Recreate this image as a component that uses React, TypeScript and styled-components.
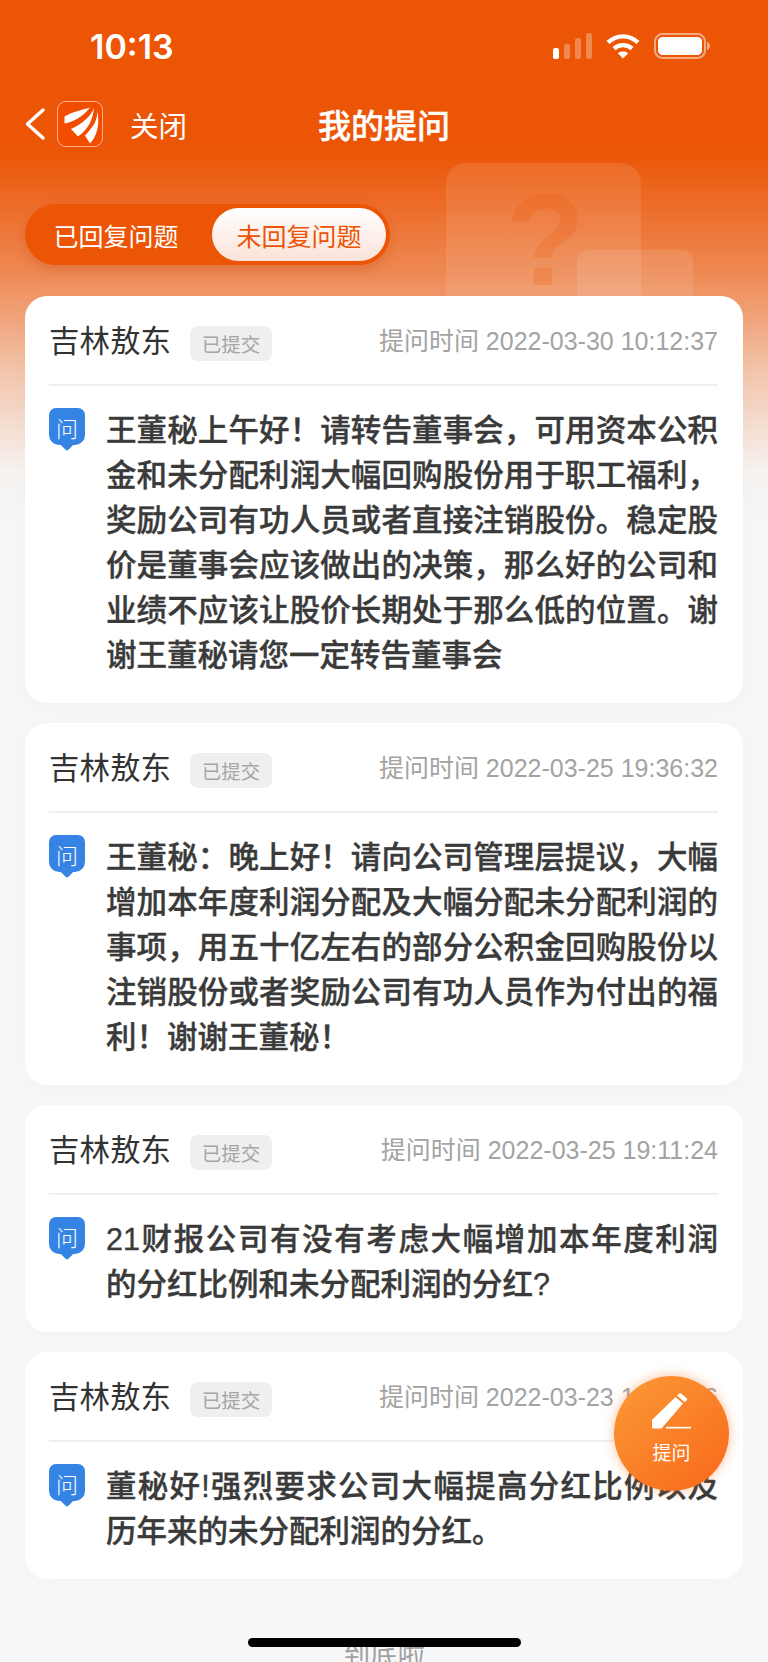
import React from 'react'
import styled, { createGlobalStyle } from 'styled-components'

const GlobalStyle = createGlobalStyle`
  html, body {
    margin: 0;
    padding: 0;
    background: #f7f8fa;
  }
  * {
    box-sizing: border-box;
  }
`

const fontStack = `"Liberation Sans", "Noto Sans CJK SC", sans-serif`

const Screen = styled.div`
  position: relative;
  width: 768px;
  height: 1662px;
  overflow: hidden;
  font-family: ${ fontStack };
  background: linear-gradient(
    #eb5505 0,
    #eb5505 150px,
    #ee8a55 275px,
    #f3c4aa 370px,
    #f6f2ef 470px,
    #f5f6f8 520px,
    #f7f8fa 100%
  );
`

const StatusBar = styled.div`
  height: 92px;
  padding: 0 58px 0 90px;
  display: flex;
  align-items: center;
  justify-content: space-between;
  color: #fff;
`

const Clock = styled.span`
  font-family: Inter, sans-serif;
  font-size: 34px;
  font-weight: 600;
`

const StatusIcons = styled.div`
  display: flex;
  align-items: center;
  gap: 14px;
`

const NavBar = styled.div`
  height: 64px;
  padding: 0 25px;
  display: grid;
  grid-template-columns: 1fr auto 1fr;
  align-items: center;
  color: #fff;
`

const NavLeft = styled.div`
  display: flex;
  align-items: center;
`

const CloseLabel = styled.span`
  margin-left: 27px;
  font-size: 28.5px;
`

const Title = styled.h1`
  margin: 0;
  font-size: 33px;
  font-weight: 500;
  -webkit-text-stroke: 0.4px #fff;
`

const Logo = styled.div`
  width: 46px;
  height: 46px;
  margin-left: 12px;
  border-radius: 9px;
  border: 1px solid rgba(255, 255, 255, 0.55);
  background: #f24c00;
  display: flex;
  align-items: center;
  justify-content: center;
`

const Ghost = styled.div`
  position: absolute;
  left: 446px;
  top: 163px;
  width: 195px;
  height: 200px;
  border-radius: 20px;
  background: rgba(255, 255, 255, 0.1);
`

const GhostMark = styled.span`
  position: absolute;
  left: 60px;
  top: 12px;
  font-size: 130px;
  line-height: 1;
  font-weight: 700;
  color: rgba(235, 85, 5, 0.22);
`

const GhostSmall = styled.div`
  position: absolute;
  left: 131px;
  top: 87px;
  width: 116px;
  height: 120px;
  border-radius: 10px;
  background: rgba(255, 255, 255, 0.1);
`

const Tabs = styled.div`
  position: relative;
  width: 365px;
  height: 61px;
  margin: 48px 0 31px 25px;
  padding: 4px;
  display: flex;
  gap: 9px;
  border-radius: 31px;
  background: #eb5505;
  box-shadow: 0 5px 12px rgba(190, 70, 10, 0.28);
`

const Tab = styled.div<{ $active?: boolean }>`
  width: 174px;
  height: 53px;
  display: flex;
  align-items: center;
  justify-content: center;
  border-radius: 27px;
  font-size: 25px;
  color: ${ (props) => (props.$active ? '#eb5505' : '#fff') };
  background: ${ (props) =>
		props.$active ? 'linear-gradient(#ffffff, #fbe2d8)' : 'transparent' };
`

const CardList = styled.div`
  position: relative;
  margin: 0 25px;
  display: flex;
  flex-direction: column;
  gap: 20px;
`

const Card = styled.section`
  background: #fff;
  border-radius: 22px;
  padding: 0 25px 24px 24px;
  box-shadow: 0 4px 16px rgba(0, 0, 0, 0.025);
`

const CardHead = styled.header`
  height: 90px;
  padding-bottom: 2px;
  display: flex;
  align-items: center;
  border-bottom: 2px solid #f0f0f0;
`

const Name = styled.span`
  font-size: 30.5px;
  color: #333;
`

const Tag = styled.span`
  width: 82px;
  height: 35px;
  margin: 9px 0 0 19px;
  border-radius: 8px;
  background: #efefef;
  color: #a6a6a6;
  font-size: 19.5px;
  display: flex;
  align-items: center;
  justify-content: center;
`

const Time = styled.span`
  margin-left: auto;
  font-size: 25px;
  color: #a3a3a3;
`

const CardBody = styled.div`
  padding-top: 22px;
  display: flex;
  align-items: flex-start;
  gap: 21px;
`

const AskBadge = styled.div`
  position: relative;
  flex: none;
  width: 36px;
  height: 37px;
  border-radius: 7px 7px 10px 10px;
  background: #3584e4;
  color: #fff;
  font-size: 22px;
  font-weight: 300;
  display: flex;
  align-items: center;
  justify-content: center;
  &::after {
    content: '';
    position: absolute;
    left: 13px;
    bottom: -4px;
    width: 10px;
    height: 10px;
    background: #3584e4;
    transform: rotate(45deg);
    border-radius: 2px;
  }
`

const Question = styled.p`
  flex: 1;
  margin: 0 0 1px;
  font-size: 30.5px;
  line-height: 45px;
  font-weight: 500;
  -webkit-text-stroke: 0.35px #3a3a3a;
  color: #3a3a3a;
  text-align: justify;
`

const Footer = styled.div`
  margin-top: 63px;
  text-align: center;
  font-size: 27.5px;
  line-height: 28px;
  color: #a0a0a0;
`

const Fab = styled.div`
  position: absolute;
  left: 614px;
  top: 1376px;
  width: 115px;
  height: 115px;
  padding-top: 17px;
  border-radius: 50%;
  background: linear-gradient(140deg, #fb9a35, #f9681b);
  box-shadow: 0 0 12px rgba(249, 110, 30, 0.45);
  color: #fff;
  font-size: 19px;
  display: flex;
  flex-direction: column;
  align-items: center;
  gap: 9px;
`

const HomeBar = styled.div`
  position: absolute;
  left: 248px;
  top: 1638px;
  width: 273px;
  height: 9px;
  border-radius: 5px;
  background: #000;
`

const SignalIcon = () => (
	<svg width='39' height='26' viewBox='0 0 39 26' fill='#fff'>
		<rect x='0' y='15' width='6' height='11' rx='2' />
		<rect x='11' y='11' width='6' height='15' rx='2' opacity='0.3' />
		<rect x='22' y='5' width='6' height='21' rx='2' opacity='0.3' />
		<rect x='33' y='0' width='6' height='26' rx='2' opacity='0.3' />
	</svg>
)

const WifiIcon = () => (
	<svg width='34' height='26' viewBox='0 0 34 26' fill='none' stroke='#fff' strokeWidth='4.2'>
		<path d='M2 9.5C10.5 1.2 23.5 1.2 32 9.5' />
		<path d='M8 15.6C13 10.9 21 10.9 26 15.6' />
		<path d='M17 25.5L11.8 20.2C14.6 17.8 19.4 17.8 22.2 20.2Z' fill='#fff' stroke='none' />
	</svg>
)

const BatteryIcon = () => (
	<svg width='56' height='26' viewBox='0 0 56 26' fill='none'>
		<rect x='1' y='1' width='50' height='24' rx='7.5' stroke='#fff' strokeOpacity='0.5' strokeWidth='2' />
		<rect x='4' y='4' width='44' height='18' rx='4.5' fill='#fff' />
		<path d='M53 9C55 9.6 56 11 56 13C56 15 55 16.4 53 17Z' fill='#fff' fillOpacity='0.5' />
	</svg>
)

const BackIcon = () => (
	<svg width='20' height='32' viewBox='0 0 20 32' fill='none' stroke='#fff' strokeWidth='3.4' strokeLinecap='round' strokeLinejoin='round'>
		<path d='M18 2L2.5 16L18 30' />
	</svg>
)

const LogoMark = () => (
	<svg width='44' height='44' viewBox='0 0 44 44' fill='#fff'>
		<path d='M32 5.5C24 8 14 10 6.5 14.5L6.5 21.5C15 20 25 15 32 5.5Z' />
		<path d='M36 5.5C33.5 14 24 22 13 27L20 34.5C29 28 35 19 36 5.5Z' />
		<path d='M39 9C40 18 35 25 27 33.5L32 41.5C38.5 35 42.5 22 39 9Z' />
	</svg>
)

const PencilIcon = () => (
	<svg width='39' height='36' viewBox='0 0 39 36' fill='#fff'>
		<path d='M0 27L23.5 4L31 10.5L9.5 35.5L1.2 35.5Q0 35.5 0 34.2Z' />
		<path d='M25 2.5L27.3 0.6Q28.3 -0.1 29.3 0.7L34.7 5.2Q35.6 6 34.9 7L32.6 9.2Z' />
		<rect x='14' y='33.8' width='25' height='1.7' />
	</svg>
)

type Item = {
  time: string;
  text: string;
}

const items: Item[] = [
	{
		time: '2022-03-30 10:12:37',
		text: '王董秘上午好！请转告董事会，可用资本公积金和未分配利润大幅回购股份用于职工福利，奖励公司有功人员或者直接注销股份。稳定股价是董事会应该做出的决策，那么好的公司和业绩不应该让股价长期处于那么低的位置。谢谢王董秘请您一定转告董事会'
	},
	{
		time: '2022-03-25 19:36:32',
		text: '王董秘：晚上好！请向公司管理层提议，大幅增加本年度利润分配及大幅分配未分配利润的事项，用五十亿左右的部分公积金回购股份以注销股份或者奖励公司有功人员作为付出的福利！谢谢王董秘！'
	},
	{
		time: '2022-03-25 19:11:24',
		text: '21财报公司有没有考虑大幅增加本年度利润的分红比例和未分配利润的分红?'
	},
	{
		time: '2022-03-23 10:25:06',
		text: '董秘好!强烈要求公司大幅提高分红比例以及历年来的未分配利润的分红。'
	}
]

const App = (): React.ReactNode => (
	<Screen lang='zh-CN'>
		<GlobalStyle />
		<Ghost>
			<GhostMark>?</GhostMark>
			<GhostSmall />
		</Ghost>
		<StatusBar>
			<Clock>10:13</Clock>
			<StatusIcons>
				<SignalIcon />
				<WifiIcon />
				<BatteryIcon />
			</StatusIcons>
		</StatusBar>
		<NavBar>
			<NavLeft>
				<BackIcon />
				<Logo>
					<LogoMark />
				</Logo>
				<CloseLabel>关闭</CloseLabel>
			</NavLeft>
			<Title>我的提问</Title>
		</NavBar>
		<Tabs>
			<Tab>已回复问题</Tab>
			<Tab $active>未回复问题</Tab>
		</Tabs>
		<CardList>
			{items.map((item) => (
				<Card key={item.time}>
					<CardHead>
						<Name>吉林敖东</Name>
						<Tag>已提交</Tag>
						<Time>提问时间 {item.time}</Time>
					</CardHead>
					<CardBody>
						<AskBadge>问</AskBadge>
						<Question>{item.text}</Question>
					</CardBody>
				</Card>
			))}
		</CardList>
		<Footer>到底啦</Footer>
		<Fab>
			<PencilIcon />
			提问
		</Fab>
		<HomeBar />
	</Screen>
)

export default App
